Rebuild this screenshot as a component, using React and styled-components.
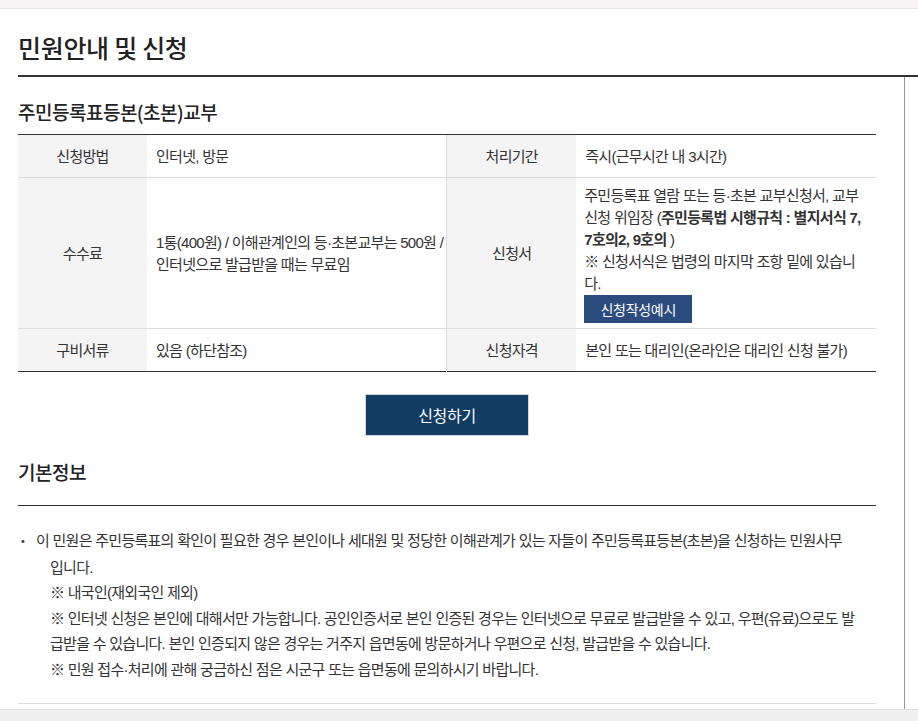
import React from 'react';
import styled, { createGlobalStyle } from 'styled-components';

const GlobalStyle = createGlobalStyle`
  html, body {
    margin: 0;
    padding: 0;
    background: #fff;
  }
  body {
    font-family: "Noto Sans CJK KR", "Noto Sans", sans-serif;
    color: #333;
  }
`;

const Page = styled.div`
  width: 918px;
  height: 721px;
  display: flex;
  flex-direction: column;
  overflow: hidden;
`;

const TopStrip = styled.div`
  height: 8px;
  flex: none;
  background: #f6f4f5;
  border-bottom: 1px solid #e9e7e8;
`;

const Header = styled.header`
  flex: none;
  margin-left: 18px;
  height: 66px;
  display: flex;
  align-items: center;
  border-bottom: 2px solid #333;
`;

const PageTitle = styled.h1`
  margin: 0;
  padding-top: 10px;
  font-size: 25px;
  font-weight: 500;
  letter-spacing: -0.3px;
  color: #222;
`;

const Body = styled.div`
  flex: 1;
  display: flex;
  min-height: 0;
`;

const Main = styled.main`
  width: 858px;
  padding: 0 28px 0 18px;
  border-right: 1px solid #999;
  display: flex;
  flex-direction: column;
`;

const SectionTitle = styled.h2`
  margin: 0;
  padding: 23px 0 0;
  height: 34px;
  font-size: 19px;
  font-weight: 500;
  letter-spacing: -0.5px;
  color: #222;
  line-height: 24px;
  border-bottom: 1px solid #333;
`;

const Table = styled.table`
  width: 100%;
  border-collapse: collapse;
  table-layout: fixed;
  font-family: "Liberation Sans", "Noto Sans CJK KR", sans-serif;
  font-size: 15px;
  letter-spacing: -0.7px;
  color: #333;
  border-bottom: 1px solid #333;
`;

const Row = styled.tr`
  & + & {
    border-top: 1px solid #ddd;
  }
`;

const Th = styled.th`
  width: ${({ $w }) => $w}px;
  background: #f4f4f4;
  font-weight: 400;
  text-align: center;
  vertical-align: middle;
  padding: 11px 0 10px;
  line-height: 21px;
  ${({ $divider }) => ($divider ? 'border-left: 1px solid #ddd;' : '')}
`;

const Td = styled.td`
  padding: ${({ $tall }) => ($tall ? '7px 12px 5px 8px' : '10px 0 9px 9px')};
  line-height: 22px;
  vertical-align: middle;
  text-align: left;
`;

const Strong = styled.b`
  font-weight: 700;
`;

const SmallButton = styled.button`
  display: block;
  width: 108px;
  height: 28px;
  border: none;
  background: #2b4b7e;
  color: #fff;
  font-family: "Noto Sans CJK KR", sans-serif;
  font-size: 14px;
  letter-spacing: -0.3px;
  padding: 0;
  cursor: pointer;
`;

const ButtonRow = styled.div`
  display: flex;
  justify-content: center;
  padding: 22px 0 0;
`;

const ApplyButton = styled.button`
  width: 164px;
  height: 42px;
  border: 1px solid #cfd6de;
  background: #123c63;
  color: #fff;
  font-family: inherit;
  font-size: 16px;
  letter-spacing: -0.3px;
  cursor: pointer;
`;

const InfoTitle = styled(SectionTitle)`
  padding-top: 24px;
  height: 45px;
`;

const InfoList = styled.ul`
  margin: 0;
  padding: 22px 0 0;
  list-style: none;
  font-family: "Liberation Sans", "Noto Sans CJK KR", sans-serif;
  font-size: 15px;
  letter-spacing: -0.72px;
  line-height: 25.6px;
  color: #333;
`;

const InfoItem = styled.li`
  padding: 0 19px 0 32px;
  text-indent: -29px;

  &::before {
    content: '•';
    display: inline-block;
    width: 15px;
    text-indent: 0;
    font-size: 11px;
    vertical-align: 1px;
  }
`;

const BottomRule = styled.div`
  margin-top: auto;
  margin-bottom: 5px;
  border-bottom: 1px solid #ddd;
`;

const Footer = styled.div`
  flex: none;
  height: 11px;
  background: #f0f0f0;
  border-top: 1px solid #dcdcdc;
`;

export default function App() {
  return (
    <Page>
      <GlobalStyle />
      <TopStrip />
      <Header>
        <PageTitle>민원안내 및 신청</PageTitle>
      </Header>
      <Body>
        <Main>
          <SectionTitle>주민등록표등본(초본)교부</SectionTitle>
          <Table>
            <tbody>
              <Row>
                <Th $w={129}>신청방법</Th>
                <Td>인터넷, 방문</Td>
                <Th $w={129} $divider>처리기간</Th>
                <Td>즉시(근무시간 내 3시간)</Td>
              </Row>
              <Row>
                <Th $w={129}>수수료</Th>
                <Td>1통(400원) / 이해관계인의 등·초본교부는 500원 / 인터넷으로 발급받을 때는 무료임</Td>
                <Th $w={129} $divider>신청서</Th>
                <Td $tall>
                  주민등록표 열람 또는 등·초본 교부신청서, 교부신청 위임장 (
                  <Strong>주민등록법 시행규칙 : 별지서식 7, 7호의2, 9호의</Strong> )
                  <br />
                  ※ 신청서식은 법령의 마지막 조항 밑에 있습니다.
                  <SmallButton type="button">신청작성예시</SmallButton>
                </Td>
              </Row>
              <Row>
                <Th $w={129}>구비서류</Th>
                <Td>있음 (하단참조)</Td>
                <Th $w={129} $divider>신청자격</Th>
                <Td>본인 또는 대리인(온라인은 대리인 신청 불가)</Td>
              </Row>
            </tbody>
          </Table>
          <ButtonRow>
            <ApplyButton type="button">신청하기</ApplyButton>
          </ButtonRow>
          <InfoTitle>기본정보</InfoTitle>
          <InfoList>
            <InfoItem>
              이 민원은 주민등록표의 확인이 필요한 경우 본인이나 세대원 및 정당한 이해관계가 있는 자들이 주민등록표등본(초본)을 신청하는 민원사무 입니다.
              <br />
              ※ 내국인(재외국인 제외)
              <br />
              ※ 인터넷 신청은 본인에 대해서만 가능합니다. 공인인증서로 본인 인증된 경우는 인터넷으로 무료로 발급받을 수 있고, 우편(유료)으로도 발급받을 수 있습니다. 본인 인증되지 않은 경우는 거주지 읍면동에 방문하거나 우편으로 신청, 발급받을 수 있습니다.
              <br />
              ※ 민원 접수·처리에 관해 궁금하신 점은 시군구 또는 읍면동에 문의하시기 바랍니다.
            </InfoItem>
          </InfoList>
          <BottomRule />
        </Main>
      </Body>
      <Footer />
    </Page>
  );
}
